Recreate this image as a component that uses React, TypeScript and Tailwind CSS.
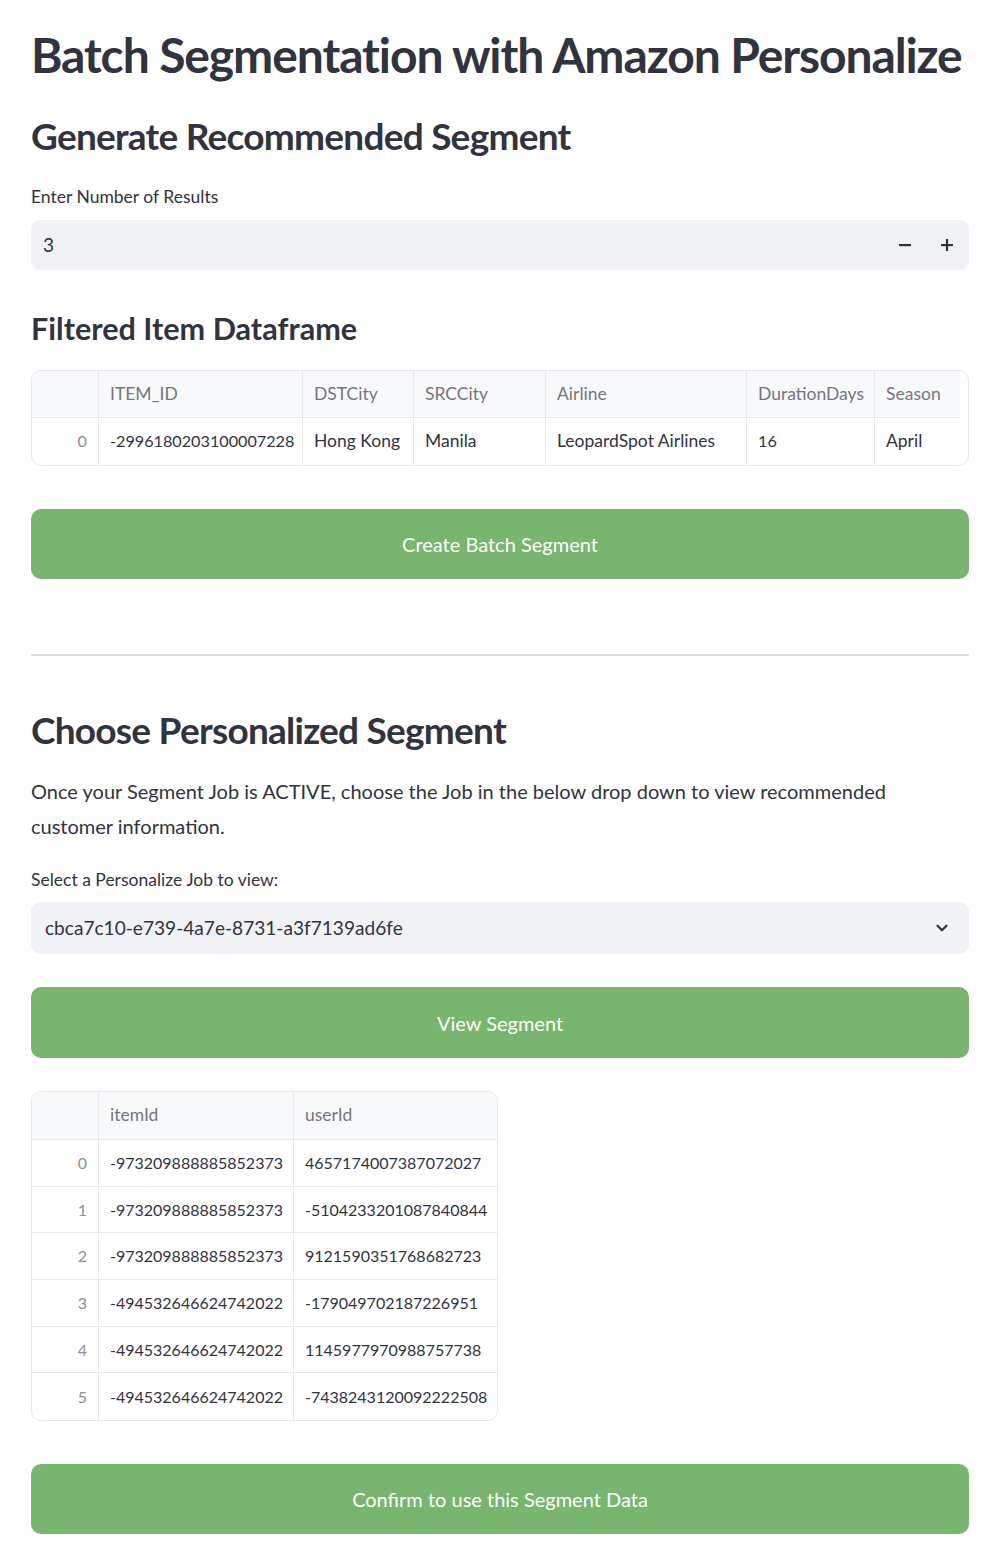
import React from "react";

const font = { fontFamily: "Lato, 'Noto Sans', sans-serif" };

function Table1() {
  const cols = [
    { name: "", w: 67 },
    { name: "ITEM_ID", w: 204 },
    { name: "DSTCity", w: 111 },
    { name: "SRCCity", w: 132 },
    { name: "Airline", w: 201 },
    { name: "DurationDays", w: 128 },
    { name: "Season", w: 85 },
  ];
  const row = ["0", "-2996180203100007228", "Hong Kong", "Manila", "LeopardSpot Airlines", "16", "April"];
  const numeric = [true, true, false, false, false, true, false];
  return (
    <div className="mt-[21px] h-[96px] w-full overflow-hidden rounded-[10px] border border-[#e6e8ee]">
      <div className="flex h-[47px] w-[928px] border-b border-[#e6e8ee] bg-[#f8f9fb]">
        {cols.map((c, i) => (
          <div
            key={i}
            style={{ width: c.w }}
            className={`flex h-full shrink-0 items-center px-[11px] text-[17.5px] text-[#74767e] ${i < cols.length - 1 ? "border-r border-[#e6e8ee]" : ""}`}
          >
            {c.name}
          </div>
        ))}
      </div>
      <div className="flex h-[47px] w-[928px]">
        {row.map((v, i) => (
          <div
            key={i}
            style={{ width: cols[i].w }}
            className={`flex h-full shrink-0 items-center px-[11px] ${numeric[i] ? "text-[16.2px]" : "text-[17.5px]"} ${i === 0 ? "justify-end text-[#8c8e95]" : "text-[#31333f]"} ${i < cols.length - 1 ? "border-r border-[#e6e8ee]" : ""}`}
          >
            {v}
          </div>
        ))}
      </div>
    </div>
  );
}

function Table2() {
  const widths = [67, 195, 204];
  const rows = [
    ["0", "-973209888885852373", "4657174007387072027"],
    ["1", "-973209888885852373", "-5104233201087840844"],
    ["2", "-973209888885852373", "9121590351768682723"],
    ["3", "-494532646624742022", "-179049702187226951"],
    ["4", "-494532646624742022", "1145977970988757738"],
    ["5", "-494532646624742022", "-7438243120092222508"],
  ];
  return (
    <div className="mt-[33px] w-[467px] overflow-hidden rounded-[10px] border border-[#e6e8ee]">
      <div className="flex h-[48px] border-b border-[#e6e8ee] bg-[#f8f9fb]">
        {["", "itemId", "userId"].map((h, i) => (
          <div
            key={i}
            style={{ width: widths[i] }}
            className={`flex h-full shrink-0 items-center px-[11px] text-[17.5px] text-[#74767e] ${i < 2 ? "border-r border-[#e6e8ee]" : ""}`}
          >
            {h}
          </div>
        ))}
      </div>
      {rows.map((r, ri) => (
        <div key={ri} className={`flex h-[46.7px] ${ri < rows.length - 1 ? "border-b border-[#e6e8ee]" : ""}`}>
          {r.map((v, i) => (
            <div
              key={i}
              style={{ width: widths[i] }}
              className={`flex h-full shrink-0 items-center px-[11px] text-[16px] ${i === 0 ? "justify-end text-[#8c8e95]" : "text-[#31333f]"} ${i < 2 ? "border-r border-[#e6e8ee]" : ""}`}
            >
              {v}
            </div>
          ))}
        </div>
      ))}
    </div>
  );
}

function GreenButton({ label, mt, h }: { label: string; mt: string; h: string }) {
  return (
    <div className={`${mt} ${h} flex w-full items-center justify-center rounded-[10px] bg-[#78b56e] text-[20px] text-white`}>
      {label}
    </div>
  );
}

export default function App() {
  return (
    <div style={font} className="min-h-[1562px] w-[990px] bg-white text-[#31333f]">
      <div className="flex w-[990px] flex-col pt-[24px] pr-[21px] pb-[26px] pl-[31px]">
        <h1 className="h-[62px] whitespace-nowrap text-[48px] font-bold leading-[62px] tracking-[-1.1px]">
          Batch Segmentation with Amazon Personalize
        </h1>
        <h2 className="mt-[26px] h-[48px] whitespace-nowrap text-[37px] font-bold leading-[48px] tracking-[-0.75px]">
          Generate Recommended Segment
        </h2>
        <div className="mt-[25px] h-[24px] text-[17.5px] leading-[24px]">Enter Number of Results</div>
        <div className="mt-[11px] flex h-[50px] w-full items-center rounded-[9px] bg-[#f0f2f6] pl-[12px] pr-[16px]">
          <span className="flex-1 text-[19px]">3</span>
          <svg width="12" height="12" viewBox="0 0 12 12" className="mr-[30px]">
            <rect x="0" y="5" width="12" height="2.2" fill="#31333f" />
          </svg>
          <svg width="12" height="12" viewBox="0 0 12 12">
            <rect x="0" y="5" width="12" height="2.2" fill="#31333f" />
            <rect x="4.9" y="0" width="2.2" height="12" fill="#31333f" />
          </svg>
        </div>
        <h3 className="mt-[39px] h-[40px] whitespace-nowrap text-[30.6px] font-bold leading-[40px]">Filtered Item Dataframe</h3>
        <Table1 />
        <GreenButton label="Create Batch Segment" mt="mt-[43px]" h="h-[70px]" />
        <div className="mt-[75px] h-[2px] w-full bg-[#dcdcdf]" />
        <h2 className="mt-[50px] h-[48px] whitespace-nowrap text-[37px] font-bold leading-[48px] tracking-[-0.75px]">
          Choose Personalized Segment
        </h2>
        <p className="mt-[20px] text-[20px] leading-[35px]">
          Once your Segment Job is ACTIVE, choose the Job in the below drop down to view recommended customer information.
        </p>
        <div className="mt-[24px] h-[24px] text-[17.5px] leading-[24px]">Select a Personalize Job to view:</div>
        <div className="mt-[10px] flex h-[52px] w-full items-center rounded-[9px] bg-[#f0f2f6] pl-[14px] pr-[18px]">
          <span className="flex-1 text-[19.1px]">cbca7c10-e739-4a7e-8731-a3f7139ad6fe</span>
          <svg width="18" height="18" viewBox="0 0 24 24" fill="none" stroke="#31333f" strokeWidth="3" strokeLinecap="round" strokeLinejoin="round">
            <path d="m6 9 6 6 6-6" />
          </svg>
        </div>
        <GreenButton label="View Segment" mt="mt-[33px]" h="h-[71px]" />
        <Table2 />
        <GreenButton label="Confirm to use this Segment Data" mt="mt-[43px]" h="h-[70px]" />
      </div>
    </div>
  );
}
